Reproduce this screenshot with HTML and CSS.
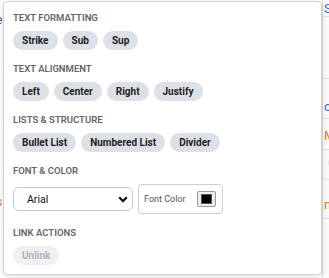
FILE: index.html
```html
<!DOCTYPE html>
<html>
<head>
<meta charset="utf-8">
<link rel="stylesheet" href="styles.css">
</head>
<body>
<div class="page">
  <div class="bg-left">
    <span class="frag f1">e</span>
    <span class="frag f2 orange">t</span>
    <span class="frag f3 blue">i</span>
    <span class="frag f4 orange">s</span>
  </div>
  <div class="bg-right">
    <div class="brow r1"><span class="blue">S</span></div>
    <div class="brow r2"></div>
    <div class="brow r3"><span class="blue">or</span></div>
    <div class="brow r4"><span class="orange">M</span></div>
    <div class="brow r5"><span class="circle"></span></div>
    <div class="brow r6"><span class="orange">m</span></div>
    <div class="brow r7"></div>
  </div>
</div>

<div class="popup">
  <section class="group">
    <h3 class="label">Text Formatting</h3>
    <div class="chips">
      <button class="chip">Strike</button>
      <button class="chip">Sub</button>
      <button class="chip">Sup</button>
    </div>
  </section>
  <section class="group">
    <h3 class="label">Text Alignment</h3>
    <div class="chips">
      <button class="chip">Left</button>
      <button class="chip">Center</button>
      <button class="chip">Right</button>
      <button class="chip">Justify</button>
    </div>
  </section>
  <section class="group">
    <h3 class="label">Lists &amp; Structure</h3>
    <div class="chips">
      <button class="chip">Bullet List</button>
      <button class="chip">Numbered List</button>
      <button class="chip">Divider</button>
    </div>
  </section>
  <section class="group">
    <h3 class="label">Font &amp; Color</h3>
    <div class="font-row">
      <div class="select">
        <span>Arial</span>
        <svg class="chev" width="10" height="7" viewBox="0 0 10 7"><path d="M1.2 1.3 L5 5.1 L8.8 1.3" fill="none" stroke="#111" stroke-width="2.2"/></svg>
      </div>
      <div class="color-box">
        <span class="color-label">Font Color</span>
        <span class="swatch"><span class="swatch-fill"></span></span>
      </div>
    </div>
  </section>
  <section class="group">
    <h3 class="label">Link Actions</h3>
    <div class="chips">
      <button class="chip disabled">Unlink</button>
    </div>
  </section>
</div>
</body>
</html>
```
FILE: styles.css
```css
* { box-sizing: border-box; }
html, body { margin: 0; padding: 0; }
body {
  width: 329px;
  height: 278px;
  overflow: hidden;
  background: #fff;
  font-family: Roboto, "Liberation Sans", sans-serif;
  position: relative;
}
.page { position: absolute; inset: 0; }
.bg-left { position: absolute; left: 0; top: 0; width: 4px; height: 278px; overflow: hidden; }
.frag { position: absolute; font-size: 12px; left: -4px; color: #555; }
.f1 { top: 13px; }
.f2 { top: 124px; }
.f3 { top: 150px; }
.f4 { top: 195px; }
.blue { color: #3a6fc4; }
.orange { color: #d9822b; }
.bg-right {
  position: absolute; left: 322px; top: 0; width: 7px; height: 278px;
  overflow: hidden; border-left: 1px solid #dcdcdc; background: #fafafa;
}
.brow {
  font-size: 13px; line-height: 14px; padding-left: 1px; white-space: nowrap;
  border-bottom: 1px solid #e2e2e2;
}
.r1 { height: 17px; padding-top: 2px; }
.r2 { height: 62px; }
.r3 { height: 40px; padding-top: 21px; }
.r4 { height: 31px; padding-top: 10px; }
.r5 { height: 30px; padding-top: 7px; }
.r6 { height: 39px; padding-top: 18px; }
.r7 { height: 40px; border-bottom: none; }
.circle { display: inline-block; width: 12px; height: 12px; border-radius: 50%; background: #e6e6e6; margin-left: 4px; }

.popup {
  position: absolute;
  left: 3px;
  top: 1px;
  width: 319px;
  height: 274px;
  background: #fff;
  border: 1px solid #d2d2d2;
  border-radius: 4px;
  box-shadow: 0 2px 6px rgba(0,0,0,0.12);
  padding: 10px 9px;
  display: flex;
  flex-direction: column;
  gap: 13px;
}
.group { display: flex; flex-direction: column; }
.label {
  margin: 0 0 7px;
  font-size: 9.5px;
  line-height: 12px;
  font-weight: 600;
  text-transform: uppercase;
  color: #666;
  letter-spacing: 0;
}
.chips { display: flex; gap: 5px; }
.chip {
  font-family: inherit;
  height: 19px;
  padding: 0 9px;
  border: none;
  border-radius: 10px;
  background: #dde1e7;
  color: #222;
  font-size: 10px;
  font-weight: 700;
  line-height: 19px;
}
.chip.disabled { background: #eef0f3; color: #afb3ba; }
.font-row { display: flex; align-items: center; gap: 5px; }
.select {
  width: 120px;
  height: 24px;
  border: 1px solid #c8c8c8;
  border-radius: 6px;
  display: flex;
  align-items: center;
  justify-content: space-between;
  padding: 0 4px 0 13px;
  font-size: 10.5px;
  color: #111;
}
.chev { display: block; }
.color-box {
  width: 85px;
  height: 30px;
  border: 1px solid #cfcfcf;
  border-radius: 4px;
  display: flex;
  align-items: center;
  justify-content: space-between;
  padding: 0 6px 0 5px;
}
.color-label { font-size: 9px; color: #4f5666; }
.swatch {
  width: 19px; height: 16px;
  border: 1px solid #9a9a9a;
  border-radius: 2px;
  background: #efefef;
  padding: 2px 3px;
  display: flex;
}
.swatch-fill { flex: 1; background: #000; border: 1px solid #555; }
```
